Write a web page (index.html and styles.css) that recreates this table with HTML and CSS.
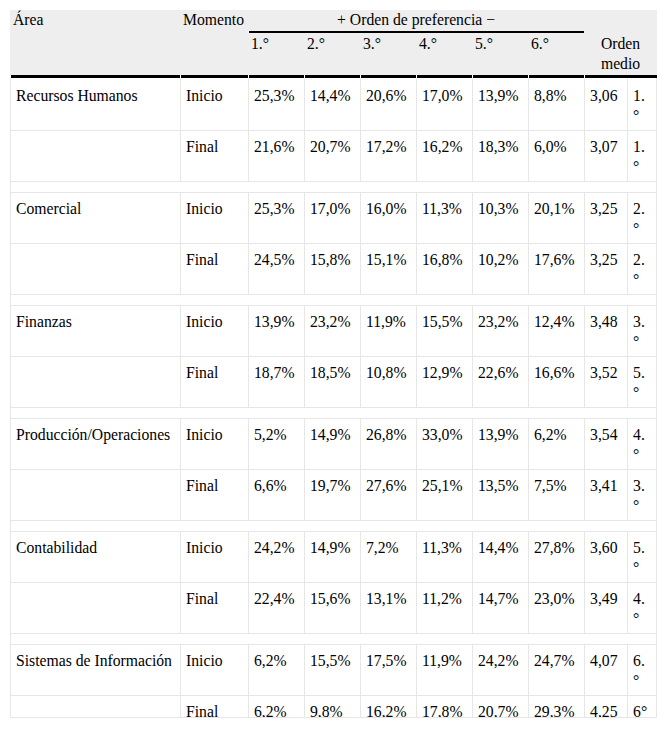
FILE: index.html
```html
<!DOCTYPE html>
<html lang="es">
<head>
<meta charset="utf-8">
<title>Orden de preferencia por área</title>
<link rel="stylesheet" href="styles.css">
</head>
<body>
<div class="wrap">
<table class="tbl">
<colgroup>
<col class="c-area"><col class="c-mom"><col class="c-pct"><col class="c-pct"><col class="c-pct"><col class="c-pct"><col class="c-pct"><col class="c-pct"><col class="c-val"><col class="c-rk">
</colgroup>
<thead>
<tr>
<th rowspan="2" class="hd rule">Área</th>
<th rowspan="2" class="hd rule">Momento</th>
<th colspan="6" class="grp">+ Orden de preferencia −</th>
<th rowspan="2" colspan="2" class="om rule">Orden medio</th>
</tr>
<tr>
<th class="num rule">1.°</th>
<th class="num rule">2.°</th>
<th class="num rule">3.°</th>
<th class="num rule">4.°</th>
<th class="num rule">5.°</th>
<th class="num rule">6.°</th>
</tr>
</thead>
<tbody>
<tr class="first"><td>Recursos Humanos</td><td>Inicio</td><td>25,3%</td><td>14,4%</td><td>20,6%</td><td>17,0%</td><td>13,9%</td><td>8,8%</td><td>3,06</td><td class="rk">1.°</td></tr>
<tr><td></td><td>Final</td><td>21,6%</td><td>20,7%</td><td>17,2%</td><td>16,2%</td><td>18,3%</td><td>6,0%</td><td>3,07</td><td class="rk">1.°</td></tr>
<tr class="sp"><td colspan="10"></td></tr>
<tr><td>Comercial</td><td>Inicio</td><td>25,3%</td><td>17,0%</td><td>16,0%</td><td>11,3%</td><td>10,3%</td><td>20,1%</td><td>3,25</td><td class="rk">2.°</td></tr>
<tr><td></td><td>Final</td><td>24,5%</td><td>15,8%</td><td>15,1%</td><td>16,8%</td><td>10,2%</td><td>17,6%</td><td>3,25</td><td class="rk">2.°</td></tr>
<tr class="sp"><td colspan="10"></td></tr>
<tr><td>Finanzas</td><td>Inicio</td><td>13,9%</td><td>23,2%</td><td>11,9%</td><td>15,5%</td><td>23,2%</td><td>12,4%</td><td>3,48</td><td class="rk">3.°</td></tr>
<tr><td></td><td>Final</td><td>18,7%</td><td>18,5%</td><td>10,8%</td><td>12,9%</td><td>22,6%</td><td>16,6%</td><td>3,52</td><td class="rk">5.°</td></tr>
<tr class="sp"><td colspan="10"></td></tr>
<tr><td>Producción/Operaciones</td><td>Inicio</td><td>5,2%</td><td>14,9%</td><td>26,8%</td><td>33,0%</td><td>13,9%</td><td>6,2%</td><td>3,54</td><td class="rk">4.°</td></tr>
<tr><td></td><td>Final</td><td>6,6%</td><td>19,7%</td><td>27,6%</td><td>25,1%</td><td>13,5%</td><td>7,5%</td><td>3,41</td><td class="rk">3.°</td></tr>
<tr class="sp"><td colspan="10"></td></tr>
<tr><td>Contabilidad</td><td>Inicio</td><td>24,2%</td><td>14,9%</td><td>7,2%</td><td>11,3%</td><td>14,4%</td><td>27,8%</td><td>3,60</td><td class="rk">5.°</td></tr>
<tr><td></td><td>Final</td><td>22,4%</td><td>15,6%</td><td>13,1%</td><td>11,2%</td><td>14,7%</td><td>23,0%</td><td>3,49</td><td class="rk">4.°</td></tr>
<tr class="sp"><td colspan="10"></td></tr>
<tr><td>Sistemas de Información</td><td>Inicio</td><td>6,2%</td><td>15,5%</td><td>17,5%</td><td>11,9%</td><td>24,2%</td><td>24,7%</td><td>4,07</td><td class="rk">6.°</td></tr>
<tr><td></td><td>Final</td><td>6,2%</td><td>9,8%</td><td>16,2%</td><td>17,8%</td><td>20,7%</td><td>29,3%</td><td>4,25</td><td class="rk">6°</td></tr>
</tbody>
</table>
</div>
</body>
</html>
```
FILE: styles.css
```css
html, body {
  margin: 0;
  padding: 0;
  background: #fff;
}

body {
  font-family: "Liberation Serif", "Times New Roman", serif;
  font-size: 15.7px;
  line-height: 19.5px;
  color: #000;
}

.wrap {
  width: 647px;
  height: 707px;
  margin: 10px;
  overflow: hidden;
  border-bottom: 1px solid #e6e6e6;
}

.tbl {
  width: 647px;
  table-layout: fixed;
  border-collapse: separate;
  border-spacing: 0;
}

.tbl th,
.tbl td {
  font-family: "Liberation Serif", "Times New Roman", serif;
  font-size: 15.7px;
  line-height: 19.5px;
  color: #000;
}

.c-area { width: 170px; }
.c-mom { width: 68px; }
.c-pct { width: 56px; }
.c-val { width: 43px; }
.c-rk { width: 30px; }

.tbl th {
  font-weight: normal;
  text-align: left;
  vertical-align: top;
  padding: 0 3px;
  background: #eee;
}

/* black rule under the header, with a 1px white gap at each column edge */
.tbl th.rule {
  background:
    linear-gradient(#000, #000) no-repeat right bottom / calc(100% - 1px) 3px,
    linear-gradient(#eee, #eee) no-repeat left top / 100% calc(100% - 3px);
}

.tbl th.grp {
  text-align: center;
  padding: 0 3px 3.5px;
  background:
    linear-gradient(#000, #000) no-repeat right bottom / calc(100% - 1px) 2px,
    linear-gradient(#eee, #eee) no-repeat left top / 100% calc(100% - 2px);
}

.tbl th.num {
  padding: 1px 3px 24.5px;
}

.tbl th.om {
  text-align: center;
  vertical-align: bottom;
  padding: 0 3px 5px;
}

.tbl td {
  vertical-align: top;
  padding: 6px 6px 5px 5px;
  border-left: 1px solid #e6e6e6;
  border-bottom: 1px solid #e6e6e6;
}

.tbl td:last-child {
  border-right: 1px solid #e6e6e6;
}

.tbl tr.first td {
  padding-top: 8px;
}

.tbl td.rk {
  word-break: break-all;
}

.tbl tr.sp td {
  height: 10px;
  padding: 0;
}
```
